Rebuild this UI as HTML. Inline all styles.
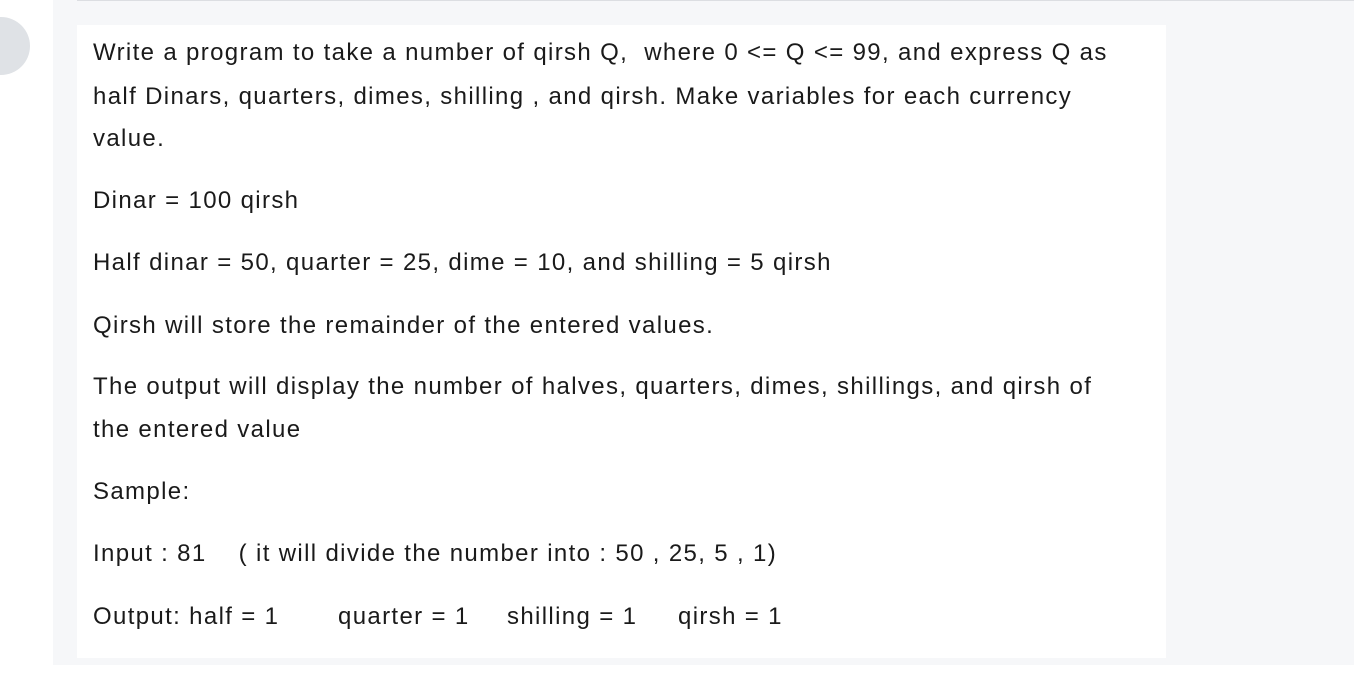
<!DOCTYPE html>
<html><head><style>
body{margin:0;width:1354px;height:673px;background:#fff;position:relative;overflow:hidden;font-family:"Liberation Sans",sans-serif;color:#1a1a1a}
.panel{position:absolute;left:53px;top:0;width:1301px;height:665px;background:#f6f7f9}
.topline{position:absolute;left:77px;top:0;width:1277px;height:1px;background:#dcdee2}
.circle{position:absolute;left:-28px;top:17px;width:58px;height:58px;border-radius:50%;background:#dfe2e6}
.box{position:absolute;left:77px;top:25px;width:1089px;height:633px;background:#fff}
.l{position:absolute;left:93px;font-size:24px;white-space:nowrap;line-height:26px;letter-spacing:1.35px}
</style></head><body>
<div class="panel"></div><div class="topline"></div><div class="circle"></div>
<div class="box"></div>
<div class="l" style="top:40px">Write a program to take a number of qirsh Q,&nbsp; where 0 &lt;= Q &lt;= 99, and express Q as</div>
<div class="l" style="top:84px">half Dinars, quarters, dimes, shilling , and qirsh. Make variables for each currency</div>
<div class="l" style="top:126px">value.</div>
<div class="l" style="top:188px">Dinar = 100 qirsh</div>
<div class="l" style="top:250px">Half dinar = 50, quarter = 25, dime = 10, and shilling = 5 qirsh</div>
<div class="l" style="top:313px">Qirsh will store the remainder of the entered values.</div>
<div class="l" style="top:374px">The output will display the number of halves, quarters, dimes, shillings, and qirsh of</div>
<div class="l" style="top:417px">the entered value</div>
<div class="l" style="top:479px">Sample:</div>
<div class="l" style="top:541px">Input : 81&nbsp;&nbsp;&nbsp; ( it will divide the number into : 50 , 25, 5 , 1)</div>
<div class="l" style="top:604px">Output: half = 1</div>
<div class="l" style="top:604px;left:338px">quarter = 1</div>
<div class="l" style="top:604px;left:507px">shilling = 1</div>
<div class="l" style="top:604px;left:678px">qirsh = 1</div>
</body></html>
